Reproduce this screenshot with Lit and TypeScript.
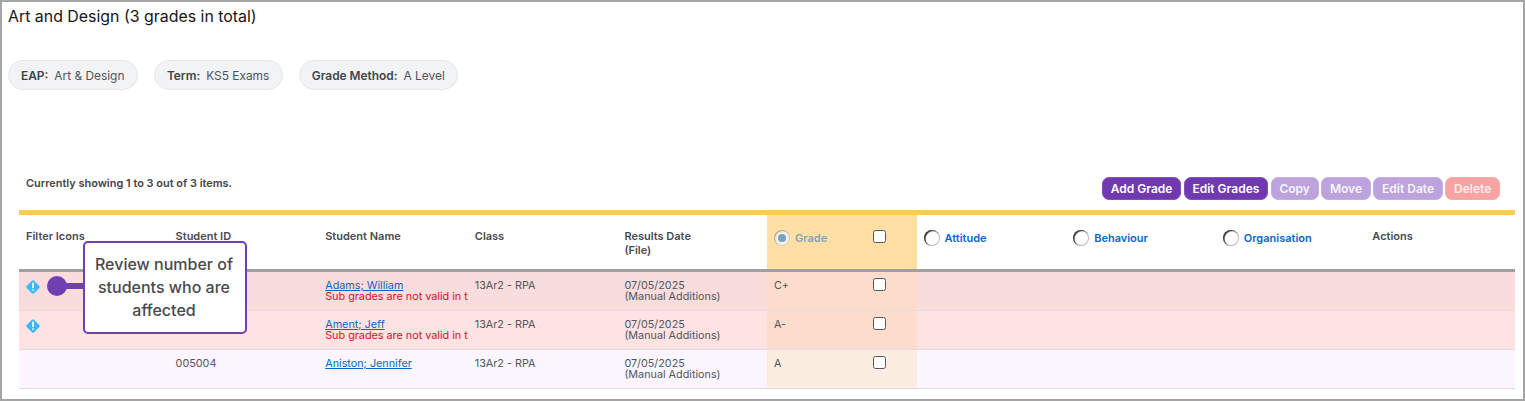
import { LitElement, html, css, nothing } from "lit";
import { customElement } from "lit/decorators.js";

const warn = html`<svg class="warn" viewBox="0 0 16 16" width="16" height="16"><rect x="2.8" y="2.8" width="10.4" height="10.4" rx="1.5" transform="rotate(45 8 8)" fill="#3bb9f6"/><rect x="7.2" y="3.6" width="1.6" height="5.6" rx=".7" fill="#fff"/><rect x="7.2" y="10.2" width="1.6" height="1.8" rx=".7" fill="#fff"/></svg>`;

const rows = [
  { cls: "r1", warn: true, id: "", name: "Adams; William", err: true, grade: "C+" },
  { cls: "r2", warn: true, id: "", name: "Ament; Jeff", err: true, grade: "A-" },
  { cls: "r3", warn: false, id: "005004", name: "Aniston; Jennifer", err: false, grade: "A" },
];

@customElement("app-root")
export class AppRoot extends LitElement {
  static styles = css`
    :host { display: block; width: 1525px; height: 401px; font-family: Inter, "Noto Sans", sans-serif; color: #4b4b4f; }
    * { box-sizing: border-box; }
    .frame { position: relative; width: 1525px; height: 401px; border: 2px solid #a5a5a5; padding: 6px 8px 0 6px; background: #fff; overflow: hidden; }
    h1 { margin: 0; font-size: 15.9px; line-height: 17px; font-weight: 400; color: #16161a; }
    .chips { display: flex; gap: 16px; margin-top: 35px; }
    .chip { height: 30px; padding: 0 12.5px 0 12px; display: flex; align-items: center; gap: 6px; border-radius: 15px; background: #f2f3f5; border: 1px solid #e5e7eb; font-size: 11.9px; color: #4b5563; }
    .chip b { font-weight: 600; color: #40444e; }
    .spacer { height: 70px; }
    .bar { height: 50px; margin: 0 -1px 0 11px; padding: 0 16px 0 7px; display: flex; justify-content: space-between; }
    .count { margin-top: 16px; font-size: 10.95px; line-height: 14px; font-weight: 600; color: #44444a; }
    .btns { display: flex; gap: 2.7px; margin-top: 17px; height: 23px; }
    .btn { height: 23px; padding: 0 7.7px; display: flex; align-items: center; border-radius: 7px; font-size: 12px; font-weight: 600; color: #fff; background: #7139b0; border: 1px solid #8550bf; white-space: nowrap; }
    .btn.off { background: #bca3de; border-color: #c5aee2; color: #f8f4fc; }
    .btn.del { background: #f7a3a3; border-color: #f7aaaa; color: #feeeee; }
    .table { margin: 0 -1px 0 11px; width: 1496px; border-top: 5px solid #ffc95e; }
    .row { display: grid; grid-template-columns: repeat(10, 149.6px); }
    .head { height: 57px; border-bottom: 3px solid #a0a0a0; font-size: 11px; line-height: 14px; font-weight: 600; color: #4a4a50; }
    .head > div { padding: 14px 0 0 7px; }
    .head .sel { padding-top: 16px; display: flex; gap: 5px; align-items: flex-start; color: #0a66c8; font-weight: 600; line-height: 14px; }
    .head .grade { background: #ffdfa3; display: flex; padding: 16px 0 0 7px; position: relative; color: #7fa4bd; height: 54px; }
    .radio { width: 16px; height: 16px; margin-top: -1px; border-radius: 50%; flex: none; background: #fff; box-shadow: inset 1.5px 1px 1px #333, inset 0 0 0 1px #bbb; }
    .grade .radio { background: #f6efe2; box-shadow: inset 1px 1px 1px #b8ad98, inset 0 0 0 1px #d8cdb8; display: flex; align-items: center; justify-content: center; }
    .grade .radio::after { content: ""; width: 8px; height: 8px; border-radius: 50%; background: #75a5c4; }
    .check { position: absolute; left: 106px; width: 13px; height: 13px; border: 1px solid #55555a; border-radius: 2.5px; background: #fff; }
    .head .check { top: 15px; }
    .body { height: 39px; border-bottom: 1px solid #dfdfe3; font-size: 10.8px; line-height: 11px; color: #55555b; }
    .body > div { padding: 8px 0 0 7px; overflow: hidden; white-space: nowrap; position: relative; }
    .r1 { background: #f9dcdc; }
    .r2 { background: #ffe2e2; }
    .r3 { background: #faf5fe; }
    .body .gc { background: #fddccb; }
    .r3 .gc { background: #fbeee0; }
    .body .check { top: 6px; }
    .warn { display: block; margin: -1px 0 0 -1px; }
    a { color: #0a66c8; text-decoration: underline; display: block; }
    .err { color: #cf1230; }
    .tip { position: absolute; left: 81px; top: 239px; width: 164px; height: 93px; background: #fff; border: 2px solid #7040b0; border-radius: 5px; display: flex; align-items: center; justify-content: center; text-align: center; font-size: 16px; line-height: 23px; font-weight: 500; color: #4a4a4a; padding: 0 8px 0 6px; }
    .dot { position: absolute; left: 45px; top: 274px; width: 20px; height: 20px; border-radius: 50%; background: #7040b0; }
    .line { position: absolute; left: 60px; top: 281px; width: 22px; height: 6px; background: #7040b0; }
  `;

  render() {
    return html`<div class="frame">
      <h1>Art and Design (3 grades in total)</h1>
      <div class="chips">
        <div class="chip"><b>EAP:</b> Art &amp; Design</div>
        <div class="chip"><b>Term:</b> KS5 Exams</div>
        <div class="chip"><b>Grade Method:</b> A Level</div>
      </div>
      <div class="spacer"></div>
      <div class="bar">
        <div class="count">Currently showing 1 to 3 out of 3 items.</div>
        <div class="btns">
          <div class="btn">Add Grade</div>
          <div class="btn">Edit Grades</div>
          <div class="btn off">Copy</div>
          <div class="btn off">Move</div>
          <div class="btn off">Edit Date</div>
          <div class="btn del">Delete</div>
        </div>
      </div>
      <div class="table">
        <div class="row head">
          <div>Filter Icons</div>
          <div>Student ID</div>
          <div>Student Name</div>
          <div>Class</div>
          <div>Results Date<br />(File)</div>
          <div class="grade"><span class="radio"></span><span style="margin-left:5px">Grade</span><span class="check"></span></div>
          <div class="sel"><span class="radio"></span>Attitude</div>
          <div class="sel"><span class="radio"></span>Behaviour</div>
          <div class="sel"><span class="radio"></span>Organisation</div>
          <div>Actions</div>
        </div>
        ${rows.map(
          (r) => html`<div class="row body ${r.cls}">
            <div>${r.warn ? warn : nothing}</div>
            <div>${r.id}</div>
            <div><a>${r.name}</a>${r.err ? html`<span class="err">Sub grades are not valid in t</span>` : nothing}</div>
            <div>13Ar2 - RPA</div>
            <div>07/05/2025<br />(Manual Additions)</div>
            <div class="gc">${r.grade}<span class="check"></span></div>
            <div></div><div></div><div></div><div></div>
          </div>`
        )}
      </div>
      <div class="line"></div>
      <div class="dot"></div>
      <div class="tip">Review number of students who are affected</div>
    </div>`;
  }
}
